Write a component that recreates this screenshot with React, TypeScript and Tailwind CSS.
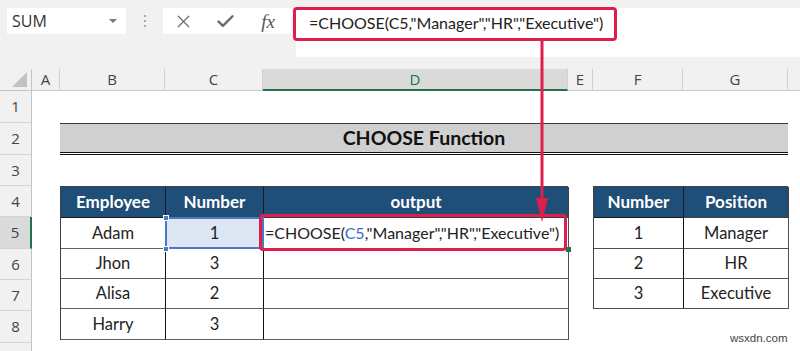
import React from "react";
import { X, Check } from "lucide-react";

const cellFont = "font-['Lato','Open_Sans',sans-serif]";
const uiFont = "font-['Open_Sans','Noto_Sans',sans-serif]";

function ColHead({ label, active, last }: { label: string; active?: boolean; last?: boolean }) {
  return (
    <div
      className={`flex items-center justify-center text-[15px] text-[#444] ${uiFont} ${
        last ? "" : "border-r border-[#d0d0d0]"
      } ${active ? "bg-[#dadada] border-b-2 border-b-[#217346] text-[#217346]" : "border-b border-b-[#c8c8c8]"}`}
    >
      {label}
    </div>
  );
}

function RowHead({ label, active }: { label: string; active?: boolean }) {
  return (
    <div
      className={`h-full flex items-center justify-center text-[15px] text-[#444] ${uiFont} border-b border-[#d4d4d4] ${
        active ? "bg-[#dadada] border-r-2 border-r-[#217346]" : "border-r border-r-[#c4c4c4]"
      }`}
    >
      {label}
    </div>
  );
}

const rowHeights = [31, 32, 31, 31, 32];

export default function App() {
  const employees = [
    ["Adam", "1"],
    ["Jhon", "3"],
    ["Alisa", "2"],
    ["Harry", "3"],
  ];
  const positions = [
    ["1", "Manager"],
    ["2", "HR"],
    ["3", "Executive"],
  ];
  const rows = ["1", "2", "3", "4", "5", "6", "7", "8", ""];
  const rowStarts = [
    "row-start-2",
    "row-start-3",
    "row-start-4",
    "row-start-5",
    "row-start-6",
    "row-start-7",
    "row-start-8",
    "row-start-9",
    "row-start-10",
  ];
  return (
    <div className="relative w-[800px] h-[351px] overflow-hidden bg-[#f1f1f1]">
      {/* toolbar */}
      <div className="h-[69px] flex items-start">
        <div className="ml-[7px] mt-[8px] w-[119px] h-[26px] bg-white flex items-center justify-between pl-[5px] pr-[9px]">
          <span className={`text-[16px] text-[#333] ${uiFont}`}>SUM</span>
          <span className="w-0 h-0 border-l-[4px] border-r-[4px] border-t-[4px] border-l-transparent border-r-transparent border-t-[#777]" />
        </div>
        <div className="w-[37px] mt-[15px] flex flex-col items-center gap-[3px]">
          <span className="w-[2px] h-[2px] bg-[#aaa]" />
          <span className="w-[2px] h-[2px] bg-[#aaa]" />
          <span className="w-[2px] h-[2px] bg-[#aaa]" />
        </div>
        <div className="mt-[8px] w-[129px] h-[26px] bg-white flex items-center">
          <div className="w-[40px] flex justify-center">
            <X size={21} strokeWidth={1.4} color="#6a6a6a" />
          </div>
          <div className="w-[45px] flex justify-center">
            <Check size={21} strokeWidth={2.8} color="#6a6a6a" />
          </div>
          <div className="w-[40px] flex justify-center">
            <span className="font-['Liberation_Serif',serif] italic text-[19px] text-[#555] leading-none">fx</span>
          </div>
        </div>
        <div className="ml-[4px] mt-[8px] flex-1 h-[49px] bg-white">
          <div className={`pl-[13px] pt-[3px] text-[16px] text-[#222] whitespace-nowrap ${cellFont}`}>
            =CHOOSE(C5,"Manager","HR","Executive")
          </div>
        </div>
      </div>

      {/* sheet */}
      <div className="grid grid-cols-[32px_28px_105px_98px_305px_25px_90px_105px_12px] grid-rows-[22px_32px_32px_31px_31px_32px_31px_31px_32px_20px]">
        {/* header row */}
        <div className="border-r border-b border-[#c4c4c4] flex items-end justify-end pr-[4px] pb-[3px]">
          <svg width="15" height="15" viewBox="0 0 15 15">
            <polygon points="15,0 15,15 0,15" fill="#c2c2c2" />
          </svg>
        </div>
        <ColHead label="A" />
        <ColHead label="B" />
        <ColHead label="C" />
        <ColHead label="D" active />
        <ColHead label="E" />
        <ColHead label="F" />
        <ColHead label="G" />
        <ColHead label="" last />

        {/* row headers */}
        {rows.map((r, i) => (
          <div key={i} className={`col-start-1 ${rowStarts[i]}`}>
            <RowHead label={r} active={r === "5"} />
          </div>
        ))}

        {/* white sheet background */}
        <div className="col-start-2 col-end-10 row-start-2 row-end-11 bg-white" />

        {/* title band */}
        <div className="col-start-3 col-end-9 row-start-3 flex flex-col">
          <div className="h-[1px] bg-[#3a3a3a]" />
          <div className={`h-[28px] bg-[#d0d0d0] flex items-center justify-center text-[19.5px] font-bold text-[#111] ${cellFont}`}>
            CHOOSE Function
          </div>
          <div className="h-[1px] bg-[#111]" />
          <div className="h-[1px] bg-white" />
          <div className="h-[1px] bg-[#111]" />
        </div>

        {/* main table */}
        <div className="col-start-3 col-end-6 row-start-5 row-end-10 z-10">
          <div className="grid grid-cols-[105px_98px_305px] border-l border-t border-[#404040]">
            <div className={`h-[31px] bg-[#1f4e78] text-white font-bold text-[17px] flex items-center justify-center border-r border-b border-[#1a1a1a] ${cellFont}`}>Employee</div>
            <div className={`h-[31px] bg-[#1f4e78] text-white font-bold text-[17px] flex items-center justify-center border-r border-b border-[#1a1a1a] ${cellFont}`}>Number</div>
            <div className={`h-[31px] bg-[#1f4e78] text-white font-bold text-[17px] flex items-center justify-center border-r border-b border-[#404040] ${cellFont}`}>output</div>
            {employees.map(([n, num], i) => (
              <React.Fragment key={n}>
                <div
                  className={`flex items-center justify-center text-[16.5px] text-[#222] border-r border-r-[#111] border-b border-b-[#606060] ${cellFont}`}
                  style={{ height: rowHeights[i + 1] - 1 }}
                >
                  {n}
                </div>
                <div
                  className={`relative flex items-center justify-center text-[16.5px] text-[#222] border-r border-r-[#111] border-b border-b-[#606060] ${cellFont} ${
                    i === 0 ? "bg-[#dde6f3]" : ""
                  }`}
                  style={{ height: rowHeights[i + 1] - 1 }}
                >
                  {num}
                  {i === 0 && (
                    <>
                      <span className="absolute -left-[1px] -top-[1px] -right-[1px] -bottom-[1px] border-2 border-[#4a78c2]" />
                      <span className="absolute -left-[3px] -top-[3px] w-[6px] h-[6px] bg-[#4a78c2] border border-white" />
                      <span className="absolute -left-[3px] -bottom-[4px] w-[6px] h-[6px] bg-[#4a78c2] border border-white" />
                    </>
                  )}
                </div>
                <div
                  className={`flex items-center pl-[1px] text-[16px] text-[#222] whitespace-nowrap overflow-visible border-r border-r-[#505050] border-b border-b-[#606060] ${cellFont}`}
                  style={{ height: rowHeights[i + 1] - 1 }}
                >
                  {i === 0 && (
                    <span>
                      =CHOOSE(<span className="text-[#3c6fc4]">C5</span>,"Manager","HR","Executive")
                    </span>
                  )}
                </div>
              </React.Fragment>
            ))}
          </div>
        </div>

        {/* position table */}
        <div className="col-start-7 col-end-9 row-start-5 row-end-9">
          <div className="grid grid-cols-[90px_105px] border-l border-t border-[#404040]">
            <div className={`h-[31px] bg-[#1f4e78] text-white font-bold text-[17px] flex items-center justify-center border-r border-b border-[#1a1a1a] ${cellFont}`}>Number</div>
            <div className={`h-[31px] bg-[#1f4e78] text-white font-bold text-[17px] flex items-center justify-center border-r border-b border-[#404040] ${cellFont}`}>Position</div>
            {positions.map(([num, p], i) => (
              <React.Fragment key={p}>
                <div
                  className={`flex items-center justify-center text-[16.5px] text-[#222] border-r border-r-[#111] border-b border-b-[#505050] ${cellFont}`}
                  style={{ height: rowHeights[i + 1] - 1 }}
                >
                  {num}
                </div>
                <div
                  className={`flex items-center justify-center text-[16.5px] text-[#222] border-r border-r-[#505050] border-b border-b-[#505050] ${cellFont}`}
                  style={{ height: rowHeights[i + 1] - 1 }}
                >
                  {p}
                </div>
              </React.Fragment>
            ))}
          </div>
        </div>
      </div>

      {/* red highlight on formula bar */}
      <div className="absolute left-[293px] top-[7px] w-[324px] h-[34px] border-[3px] border-[#dc1f4d] rounded-[4px] pointer-events-none" />
      {/* red highlight on D5 */}
      <div className="absolute left-[259px] top-[214px] w-[308px] h-[37px] border-[3px] border-[#dc1f4d] rounded-[4px] pointer-events-none z-20" />
      {/* arrow */}
      <svg className="absolute left-[532px] top-[40px] z-20" width="20" height="184" viewBox="0 0 20 184">
        <line x1="10" y1="0" x2="10" y2="166" stroke="#dc1f4d" strokeWidth="3" />
        <polygon points="4,158 16,158 10,182" fill="#dc1f4d" />
      </svg>
      {/* small green fill handle */}
      <div className="absolute left-[566px] top-[247px] w-[5px] h-[5px] bg-[#217346] z-10" />
      {/* watermark */}
      <div className="absolute left-[730px] top-[330px] text-[11.5px] text-[#444] font-['Liberation_Sans',sans-serif] z-30">
        wsxdn.com
      </div>
    </div>
  );
}
